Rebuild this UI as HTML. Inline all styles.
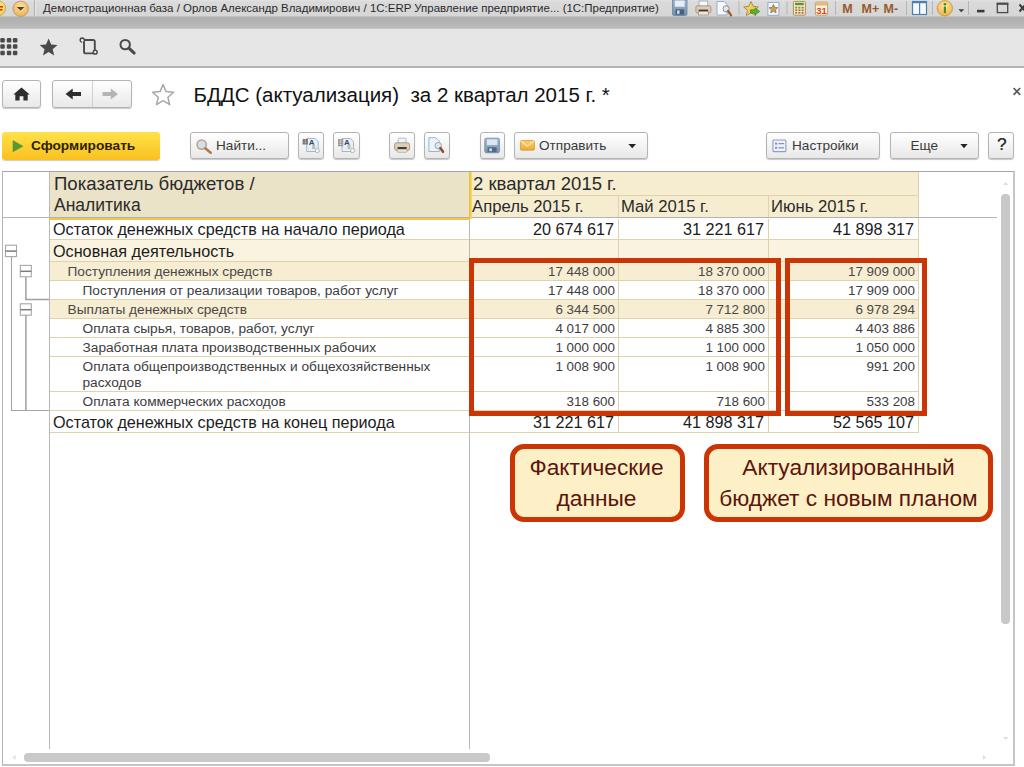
<!DOCTYPE html>
<html><head><meta charset="utf-8">
<style>
*{box-sizing:border-box;margin:0;padding:0}
html,body{width:1024px;height:767px;overflow:hidden;background:#fff}
body{font-family:"Liberation Sans",sans-serif;position:relative;color:#222}
.abs{position:absolute}
.btn{position:absolute;border:1px solid #b4b4b4;border-radius:3px;background:linear-gradient(#ffffff,#e8e8e8);box-shadow:0 1px 1px rgba(0,0,0,.22)}
.bt{position:absolute;font-size:13.6px;line-height:16px;color:#3a3a3a;white-space:nowrap}
.cell{position:absolute;white-space:nowrap}
.hl{position:absolute;background:#ddd3ad}
.num{text-align:right}
.red{position:absolute;border:5px solid #cb3506}
.call{position:absolute;border:5px solid #cb3506;border-radius:14px;background:#fdefc6;color:#5b150b;font-size:22.7px;line-height:31px;text-align:center;white-space:nowrap}
svg{position:absolute;overflow:visible}
</style></head><body>
<div class="abs" style="left:0;top:28px;width:1024px;height:38px;background:#e6e6e6"></div>
<div class="abs" style="left:0;top:0;width:1024px;height:30px;background:linear-gradient(#e2e2e2 0,#dadada 2px,#d6d6d6 15.800px,#b0b0b0 17.200px,#b3b3b3 22px,#bcbcbc 28.300px,#e6e6e6 29.300px,#e6e6e6 30px)"></div>
<div class="abs" style="left:0;top:66px;width:1024px;height:2px;background:#b4b4b4"></div>
<div class="abs" style="left:43px;top:0.500px;font-size:11.48px;line-height:14px;color:#2a2a2a;white-space:nowrap">Демонстрационная база / Орлов Александр Владимирович / 1С:ERP Управление предприятие... (1С:Предприятие)</div>
<!-- title bar icons -->
<svg style="left:0;top:0" width="1024" height="30" viewBox="0 0 1024 30">
<defs>
<radialGradient id="gOr" cx="50%" cy="35%" r="65%"><stop offset="0" stop-color="#ffe0a0"/><stop offset="1" stop-color="#eeb055"/></radialGradient>
<radialGradient id="g1c" cx="60%" cy="40%" r="70%"><stop offset="0" stop-color="#fff08a"/><stop offset="1" stop-color="#f3c030"/></radialGradient>
<radialGradient id="gInf" cx="50%" cy="35%" r="65%"><stop offset="0" stop-color="#ffe9a8"/><stop offset="1" stop-color="#efb040"/></radialGradient>
<linearGradient id="gFl" x1="0" y1="0" x2="0" y2="1"><stop offset="0" stop-color="#a3b8cc"/><stop offset="1" stop-color="#7590ab"/></linearGradient>
</defs>
<!-- 1C logo partially cut -->
<circle cx="-2" cy="8.3" r="7.6" fill="url(#g1c)" stroke="#b9a070" stroke-width="0.8"/>
<rect x="-3" y="6" width="6" height="1.6" fill="#e03a10"/><rect x="-3" y="9" width="5.5" height="1.6" fill="#e03a10"/>
<!-- orange round menu -->
<circle cx="20.7" cy="8.8" r="7.7" fill="url(#gOr)" stroke="#b5987a" stroke-width="0.9"/>
<path d="M16.800 7.100h7.600l-3.800 3.300z" fill="#4b4032"/>
<rect x="34" y="0" width="1" height="16" fill="#b0b0b0"/><rect x="35" y="0" width="1" height="16" fill="#e8e8e8"/>
<!-- floppy -->
<g transform="translate(672.5,0)">
<path d="M0 0h14.5v14a1.5 1.5 0 0 1-1.5 1.5H1.5A1.500 1.500 0 0 1 0 14z" fill="url(#gFl)" stroke="#6a86a3" stroke-width="0.8"/>
<rect x="2.4" y="0.5" width="9.7" height="6.2" fill="#e6eef7"/>
<rect x="3" y="9.3" width="8.6" height="5.4" fill="#4a6079"/><rect x="4.6" y="10.4" width="2.4" height="3.4" fill="#d8e2ee"/>
</g>
<!-- printer -->
<g transform="translate(695.5,1)">
<rect x="3.6" y="0" width="8.6" height="6" fill="#f5f8fc" stroke="#9aa7b6" stroke-width="0.8"/>
<rect x="0.4" y="4.8" width="15" height="7.2" rx="1.6" fill="#dccbb3" stroke="#9c8a74" stroke-width="0.8"/>
<rect x="3.2" y="8.6" width="9.4" height="1.8" fill="#3a3a3a"/>
<rect x="3" y="10.6" width="9.8" height="3.4" fill="#eee6da" stroke="#9c8a74" stroke-width="0.7"/>
</g>
<!-- preview -->
<g transform="translate(716.5,1)">
<path d="M0.5 0.5h7l3 3v10.500h-10z" fill="#f6f9fd" stroke="#8ea7c4" stroke-width="0.9"/>
<circle cx="9.6" cy="7.800" r="3.100" fill="#dfe9f5" stroke="#9a8a80" stroke-width="1"/>
<path d="M11.6 10l3 4.300" stroke="#9a5a30" stroke-width="2.200" stroke-linecap="round"/>
</g>
<rect x="738.500" y="1" width="1" height="14" fill="#b5b5b5"/>
<!-- star with green arrow -->
<g transform="translate(743.500,1.500)">
<path d="M7.500 0l2.200 4.800 5.100 0.600-3.800 3.500 1.100 5.100-4.600-2.700-4.600 2.700 1.100-5.100L0.200 5.400l5.100-0.600z" fill="#f2cf58" stroke="#a98544" stroke-width="0.9"/>
<path d="M7 8.300h4.600V6.200l4.600 3.700-4.600 3.700v-2.100H7z" fill="#58b52e" stroke="#3b8a1c" stroke-width="0.700"/>
</g>
<!-- star in page -->
<g transform="translate(767.500,2)">
<rect x="0.400" y="0.400" width="11" height="12.800" fill="#f5f8fc" stroke="#8ea7c4" stroke-width="0.9"/>
<path d="M5.900 2.400l1.300 2.900 3.100 0.400-2.300 2.100 0.600 3.100-2.700-1.600-2.700 1.600 0.600-3.100-2.300-2.100 3.100-0.400z" fill="#c9a25a" stroke="#8a6a3a" stroke-width="0.700"/>
</g>
<rect x="786.500" y="1" width="1" height="14" fill="#b5b5b5"/>
<!-- calc -->
<g transform="translate(793,1)">
<rect x="0.400" y="0.400" width="12" height="13.800" rx="1" fill="#f3e7c2" stroke="#a98a52" stroke-width="0.9"/>
<rect x="2" y="1.800" width="8.800" height="2.400" fill="#4e9a3a"/>
<g fill="#9a7a44"><rect x="2.200" y="5.800" width="2" height="1.700"/><rect x="5.400" y="5.800" width="2" height="1.700"/><rect x="8.600" y="5.800" width="2" height="1.700"/><rect x="2.200" y="8.400" width="2" height="1.700"/><rect x="5.400" y="8.400" width="2" height="1.700"/><rect x="8.600" y="8.400" width="2" height="1.700"/><rect x="2.200" y="11" width="2" height="1.700"/><rect x="5.400" y="11" width="2" height="1.700"/><rect x="8.600" y="11" width="2" height="1.700"/></g>
</g>
<!-- calendar -->
<g transform="translate(815,0.500)">
<rect x="0.400" y="1.600" width="12.200" height="13" rx="1" fill="#fbf3df" stroke="#b99a62" stroke-width="0.9"/>
<rect x="0.800" y="2" width="11.400" height="3" fill="#eab673"/>
<text x="6.500" y="13.400" font-family="Liberation Sans" font-weight="bold" font-size="9.500" text-anchor="middle" fill="#e2441c">31</text>
</g>
<rect x="835" y="1" width="1" height="14" fill="#b5b5b5"/>
<g font-family="Liberation Sans" font-weight="bold" font-size="12.500" fill="#99592c">
<text x="842.300" y="12.800">M</text><text x="861.600" y="12.800">M+</text><text x="883.600" y="12.800">M-</text></g>
<rect x="906" y="1" width="1" height="14" fill="#b5b5b5"/>
<!-- window -->
<rect x="912.500" y="1.500" width="14" height="13" fill="#f4f8fc" stroke="#4f7fae" stroke-width="1.200"/><rect x="912" y="1" width="15" height="2.200" fill="#4f7fae"/><rect x="919" y="2" width="1.200" height="12.500" fill="#4f7fae"/>
<rect x="932" y="1" width="1" height="14" fill="#b5b5b5"/>
<!-- info -->
<circle cx="944.800" cy="8.300" r="7.700" fill="url(#gInf)" stroke="#c09a5a" stroke-width="0.9"/>
<rect x="943.800" y="6.600" width="2.200" height="6.400" fill="#4d8a22"/><circle cx="944.900" cy="4.300" r="1.300" fill="#4d8a22"/>
<path d="M958.400 9.300h5.800l-2.900 3z" fill="#3c3c3c"/>
<rect x="968" y="1" width="1" height="14" fill="#b5b5b5"/>
<rect x="977" y="9.800" width="7.500" height="2.600" fill="#3a3a3a"/>
<rect x="997.300" y="3.400" width="10.400" height="9.200" fill="none" stroke="#4a4a4a" stroke-width="1.300"/><rect x="996.700" y="2.800" width="11.600" height="2" fill="#4a4a4a"/>
<path d="M1019.500 4.500l6 7M1025.500 4.500l-6 7" stroke="#3a3a3a" stroke-width="2"/>
</svg>
<!-- section toolbar icons -->
<svg style="left:0;top:28px" width="160" height="38" viewBox="0 28 160 38">
<g fill="#4a4a4a">
<rect x="0.300" y="38" width="4.500" height="4.500" rx="1.200"/><rect x="6.800" y="38" width="4.500" height="4.500" rx="1.200"/><rect x="12.900" y="38" width="4.500" height="4.500" rx="1.200"/>
<rect x="0.300" y="44.300" width="4.500" height="4.500" rx="1.200"/><rect x="6.800" y="44.300" width="4.500" height="4.500" rx="1.200"/><rect x="12.900" y="44.300" width="4.500" height="4.500" rx="1.200"/>
<rect x="0.300" y="50.700" width="4.500" height="4.500" rx="1.200"/><rect x="6.800" y="50.700" width="4.500" height="4.500" rx="1.200"/><rect x="12.900" y="50.700" width="4.500" height="4.500" rx="1.200"/>
<path d="M48.600 38.600l2.600 5.900 6.300 0.600-4.800 4.100 1.500 6.300-5.600-3.400-5.600 3.400 1.500-6.300-4.800-4.100 6.300-0.600z"/>
</g>
<!-- history scroll -->
<path d="M82.200 41.800a1.800 1.800 0 1 1 1.800-1.800h9.200a1.600 1.600 0 0 1 1.600 1.600v9.500M84 40v11.400a2 2 0 0 0 2 2h8.600" fill="none" stroke="#4a4a4a" stroke-width="1.900" stroke-linejoin="round"/>
<circle cx="95.200" cy="52.200" r="1.900" fill="#f4f4f4" stroke="#4a4a4a" stroke-width="1.500"/>
<circle cx="82.300" cy="40.300" r="1.300" fill="#f4f4f4"/>
<!-- search -->
<circle cx="125.200" cy="44.600" r="4.700" fill="none" stroke="#4a4a4a" stroke-width="2"/>
<path d="M128.900 48.200l5.300 4.900" stroke="#4a4a4a" stroke-width="3" stroke-linecap="round"/>
</svg>

<div class="btn" style="left:2px;top:80px;width:39px;height:28px"></div>
<div class="btn" style="left:52px;top:80px;width:80px;height:28px"></div>
<div class="abs" style="left:92px;top:81px;width:1px;height:26px;background:#d0d0d0"></div>
<div class="abs" style="left:193.500px;top:83px;font-size:20.500px;line-height:24px;color:#111;white-space:pre">БДДС (актуализация)  за 2 квартал 2015 г. *</div>
<div class="abs" style="left:2px;top:132px;width:158px;height:27.5px;border-radius:3px;background:linear-gradient(#ffe24a,#f9c01f);box-shadow:0 1px 1px rgba(0,0,0,.2)"></div>
<div class="abs" style="left:31px;top:138px;font-size:13.7px;font-weight:bold;line-height:16px;color:#2b2200;white-space:nowrap">Сформировать</div>
<div class="btn" style="left:190px;top:132px;width:98.5px;height:27px"></div>
<div class="btn" style="left:298px;top:132px;width:26px;height:27px"></div>
<div class="btn" style="left:333px;top:132px;width:26.5px;height:27px"></div>
<div class="btn" style="left:389px;top:132px;width:26px;height:27px"></div>
<div class="btn" style="left:424px;top:132px;width:26px;height:27px"></div>
<div class="btn" style="left:479.5px;top:132px;width:25.5px;height:27px"></div>
<div class="btn" style="left:514px;top:132px;width:133.5px;height:27px"></div>
<div class="btn" style="left:766px;top:132px;width:114px;height:27px"></div>
<div class="btn" style="left:889.5px;top:132px;width:89.5px;height:27px"></div>
<div class="btn" style="left:988px;top:132px;width:26px;height:27px"></div>
<div class="bt" style="left:216px;top:138px">Найти...</div>
<div class="bt" style="left:539px;top:138px">Отправить</div>
<div class="bt" style="left:792px;top:138px">Настройки</div>
<div class="bt" style="left:910.500px;top:138px">Еще</div>
<div class="bt" style="left:997px;top:136.5px;font-size:17px;font-weight:normal;color:#333;text-shadow:0.300px 0 0 #333">?</div>
<!-- nav + command bar icons -->
<svg style="left:0;top:70px" width="1024" height="100" viewBox="0 70 1024 100">
<defs>
<linearGradient id="gFl2" x1="0" y1="0" x2="0" y2="1"><stop offset="0" stop-color="#aabdd0"/><stop offset="1" stop-color="#7c96b0"/></linearGradient>
<linearGradient id="gEnv" x1="0" y1="0" x2="0" y2="1"><stop offset="0" stop-color="#f9d376"/><stop offset="1" stop-color="#e9a935"/></linearGradient>
</defs>
<!-- home -->
<path d="M21.500 87.500l8.200 7h-2v6h-4.300v-4.200h-3.800v4.200h-4.300v-6h-2z" fill="#2e2e2e"/>
<!-- back -->
<path d="M65.500 94l7.200-5.600v3.700h8.300v3.800h-8.300v3.700z" fill="#2e2e2e"/>
<!-- forward -->
<path d="M118 94l-7.200-5.600v3.700h-8.300v3.800h8.300v3.700z" fill="#b4b4b4"/>
<!-- favourite star outline -->
<path d="M163.100 84.600l3 7 7.600 0.700-5.800 5 1.800 7.400-6.600-4-6.600 4 1.800-7.400-5.800-5 7.600-0.700z" fill="#fff" stroke="#a8a8a8" stroke-width="1.500" stroke-linejoin="round"/>
<!-- play -->
<path d="M13 140.600l10 5.600-10 5.600z" fill="#4d9e2c"/><path d="M13 140.600l10 5.600-10 5.600z" fill="none" stroke="#7a8a3a" stroke-width="0.600"/>
<!-- find magnifier -->
<circle cx="201.700" cy="144.600" r="4.600" fill="#cfe0f2" stroke="#c3a083" stroke-width="1.500"/>
<path d="M205.300 148.300l5.400 4.400" stroke="#ad7c52" stroke-width="2.600" stroke-linecap="round"/>
<!-- doc icons -->
<g transform="translate(302.700,137)">
<path d="M4 1.500h8.500l3 3V14.500H4z" fill="#e9eff7" stroke="#a3b6cc" stroke-width="1"/>
<rect x="0" y="2.200" width="5.200" height="5.200" fill="#5a5a5a"/><path d="M0 4h5.200M0 5.800h5.200M2.600 2.200v5.200" stroke="#c8c8c8" stroke-width="0.600"/>
<text x="6" y="7.600" font-family="Liberation Sans" font-weight="bold" font-size="8" fill="#34466a">A</text>
<rect x="9.500" y="7.500" width="3" height="4.500" fill="#b8c0b4"/>
<circle cx="14.600" cy="13.600" r="2.100" fill="#f4f4f4" stroke="#b0b0b0" stroke-width="0.900"/>
</g>
<g transform="translate(338,137)">
<path d="M4 1.500h8.500l3 3V14.500H4z" fill="#e9eff7" stroke="#a3b6cc" stroke-width="1"/>
<rect x="0" y="2.200" width="5.200" height="7" fill="#8a8a8a"/><path d="M0 4h5.200M0 5.800h5.200M0 7.600h5.200M2.600 2.200v7" stroke="#d8d8d8" stroke-width="0.600"/>
<text x="6" y="7.600" font-family="Liberation Sans" font-weight="bold" font-size="8" fill="#34466a">A</text>
<rect x="9.500" y="7.500" width="3" height="4.500" fill="#b8c0b4"/>
<circle cx="14.600" cy="13.600" r="2.100" fill="#f4f4f4" stroke="#b0b0b0" stroke-width="0.900"/>
</g>
<!-- printer -->
<g transform="translate(394.200,137.800)">
<rect x="4" y="0.400" width="7.800" height="6" rx="1" fill="#f0f5fb" stroke="#a9b7c8" stroke-width="0.900"/>
<rect x="0.400" y="5" width="15" height="7.600" rx="2" fill="#dfcfb9" stroke="#a59380" stroke-width="0.900"/>
<rect x="3.400" y="9.300" width="9" height="1.900" fill="#2e2e2e"/>
<rect x="3" y="11.400" width="9.800" height="3" rx="0.800" fill="#efe8de" stroke="#a59380" stroke-width="0.700"/>
</g>
<!-- preview -->
<g transform="translate(428.400,137.200)">
<path d="M0.500 0.500h7l3.400 3.400v10.400h-10.400z" fill="#eef3fa" stroke="#9db3cc" stroke-width="1"/>
<circle cx="9.800" cy="8.400" r="3.200" fill="#dde6f3" stroke="#a9a2a8" stroke-width="1"/>
<path d="M12 10.800l2.600 3.800" stroke="#8a5330" stroke-width="2.600" stroke-linecap="round"/>
</g>
<!-- save floppy -->
<g transform="translate(484.400,137.800)">
<rect x="0.400" y="0.400" width="14.600" height="14.600" rx="1.500" fill="url(#gFl2)" stroke="#6f8eb0" stroke-width="0.900"/>
<rect x="2.600" y="1.600" width="10.200" height="5.600" fill="#dde7f2"/>
<rect x="3.200" y="9.400" width="9" height="5" fill="#4f6988"/><rect x="5" y="10.600" width="2.400" height="2.800" fill="#dfe7f0"/>
</g>
<!-- envelope -->
<rect x="520.400" y="140.600" width="14" height="9.600" rx="1" fill="url(#gEnv)" stroke="#d69a2c" stroke-width="0.800"/>
<path d="M520.800 141l6.600 5 6.600-5" fill="none" stroke="#fbe6a8" stroke-width="1.100"/>
<!-- dropdown arrows -->
<path d="M628.400 144h7.600l-3.800 4.200z" fill="#222"/>
<path d="M960.400 144h7.200l-3.600 4.200z" fill="#222"/>
<!-- settings icon -->
<rect x="772.900" y="140" width="13" height="11.600" rx="1" fill="#eef1f8" stroke="#8e9ec4" stroke-width="1.100"/>
<g fill="#8793b8"><rect x="775" y="142.600" width="2.200" height="2"/><rect x="778.400" y="143" width="5.600" height="1.200"/><rect x="775" y="146.800" width="2.200" height="2"/><rect x="778.400" y="147.200" width="5.600" height="1.200"/></g>
<!-- close x -->
<path d="M1013.600 88l6.600 6.800M1020.200 88l-6.600 6.800" stroke="#5a5a5a" stroke-width="1.700"/>
</svg>

<div class="abs" style="left:2px;top:171px;width:1013px;height:595px;border:2px solid #c6c6c6;border-top:1px solid #a6a6a6;border-left:1px solid #b4b4b4"></div>
<div class="abs" style="left:49px;top:172px;width:420px;height:46px;background:#eae3c8"></div>
<div class="abs" style="left:470px;top:172px;width:448px;height:46px;background:#f6edd0"></div>
<div class="cell" style="left:54px;top:174px;font-size:18.600px;line-height:20.5px;color:#2a2a2a">Показатель бюджетов /</div>
<div class="cell" style="left:54px;top:194.5px;font-size:17.5px;line-height:20.5px;color:#2a2a2a">Аналитика</div>
<div class="cell" style="left:473px;top:173.5px;font-size:18.5px;line-height:20px;color:#2a2a2a">2 квартал 2015 г.</div>
<div class="cell" style="left:472px;top:197px;font-size:16.7px;line-height:20px;color:#2a2a2a">Апрель 2015 г.</div>
<div class="cell" style="left:621px;top:197px;font-size:16.7px;line-height:20px;color:#2a2a2a">Май 2015 г.</div>
<div class="cell" style="left:771px;top:197px;font-size:16.7px;line-height:20px;color:#2a2a2a">Июнь 2015 г.</div>
<div class="hl" style="left:470px;top:195px;width:448px;height:1px"></div>
<div class="hl" style="left:618px;top:196px;width:1px;height:22px"></div>
<div class="hl" style="left:768px;top:196px;width:1px;height:22px"></div>
<div class="abs" style="left:49px;top:239px;width:869px;height:22px;background:#faf3df"></div>
<div class="abs" style="left:49px;top:261px;width:869px;height:19px;background:#f6edd2"></div>
<div class="abs" style="left:49px;top:299px;width:869px;height:19px;background:#f6edd2"></div>
<div class="cell" style="left:53px;top:219px;font-size:16.2px;line-height:20px;color:#1c1c1c">Остаток денежных средств на начало периода</div>
<div class="cell num" style="left:469px;top:219px;width:145px;font-size:16.2px;line-height:20px;color:#1c1c1c">20 674 617</div>
<div class="cell num" style="left:618px;top:219px;width:146px;font-size:16.2px;line-height:20px;color:#1c1c1c">31 221 617</div>
<div class="cell num" style="left:768px;top:219px;width:146px;font-size:16.2px;line-height:20px;color:#1c1c1c">41 898 317</div>
<div class="hl" style="left:49px;top:239px;width:870px;height:1px"></div>
<div class="cell" style="left:53px;top:240px;font-size:16.2px;line-height:22px;color:#1c1c1c">Основная деятельность</div>
<div class="hl" style="left:49px;top:261px;width:870px;height:1px"></div>
<div class="cell" style="left:67.5px;top:264px;font-size:13.7px;line-height:16px;color:#484848">Поступления денежных средств</div>
<div class="cell num" style="left:469px;top:264px;width:146px;font-size:13.4px;line-height:16px;color:#484848">17 448 000</div>
<div class="cell num" style="left:618px;top:264px;width:147px;font-size:13.4px;line-height:16px;color:#484848">18 370 000</div>
<div class="cell num" style="left:768px;top:264px;width:147px;font-size:13.4px;line-height:16px;color:#484848">17 909 000</div>
<div class="hl" style="left:49px;top:280px;width:870px;height:1px"></div>
<div class="cell" style="left:82.5px;top:283px;font-size:13.7px;line-height:16px;color:#3c3c3c">Поступления от реализации товаров, работ услуг</div>
<div class="cell num" style="left:469px;top:283px;width:146px;font-size:13.4px;line-height:16px;color:#3c3c3c">17 448 000</div>
<div class="cell num" style="left:618px;top:283px;width:147px;font-size:13.4px;line-height:16px;color:#3c3c3c">18 370 000</div>
<div class="cell num" style="left:768px;top:283px;width:147px;font-size:13.4px;line-height:16px;color:#3c3c3c">17 909 000</div>
<div class="hl" style="left:49px;top:299px;width:870px;height:1px"></div>
<div class="cell" style="left:67.5px;top:302px;font-size:13.7px;line-height:16px;color:#484848">Выплаты денежных средств</div>
<div class="cell num" style="left:469px;top:302px;width:146px;font-size:13.4px;line-height:16px;color:#484848">6 344 500</div>
<div class="cell num" style="left:618px;top:302px;width:147px;font-size:13.4px;line-height:16px;color:#484848">7 712 800</div>
<div class="cell num" style="left:768px;top:302px;width:147px;font-size:13.4px;line-height:16px;color:#484848">6 978 294</div>
<div class="hl" style="left:49px;top:318px;width:870px;height:1px"></div>
<div class="cell" style="left:82.5px;top:321px;font-size:13.7px;line-height:16px;color:#3c3c3c">Оплата сырья, товаров, работ, услуг</div>
<div class="cell num" style="left:469px;top:321px;width:146px;font-size:13.4px;line-height:16px;color:#3c3c3c">4 017 000</div>
<div class="cell num" style="left:618px;top:321px;width:147px;font-size:13.4px;line-height:16px;color:#3c3c3c">4 885 300</div>
<div class="cell num" style="left:768px;top:321px;width:147px;font-size:13.4px;line-height:16px;color:#3c3c3c">4 403 886</div>
<div class="hl" style="left:49px;top:337px;width:870px;height:1px"></div>
<div class="cell" style="left:82.5px;top:340px;font-size:13.7px;line-height:16px;color:#3c3c3c">Заработная плата производственных рабочих</div>
<div class="cell num" style="left:469px;top:340px;width:146px;font-size:13.4px;line-height:16px;color:#3c3c3c">1 000 000</div>
<div class="cell num" style="left:618px;top:340px;width:147px;font-size:13.4px;line-height:16px;color:#3c3c3c">1 100 000</div>
<div class="cell num" style="left:768px;top:340px;width:147px;font-size:13.4px;line-height:16px;color:#3c3c3c">1 050 000</div>
<div class="hl" style="left:49px;top:356px;width:870px;height:1px"></div>
<div class="cell" style="left:82.5px;top:359px;font-size:13.7px;line-height:16px;color:#3c3c3c">Оплата общепроизводственных и общехозяйственных<br>расходов</div>
<div class="cell num" style="left:469px;top:359px;width:146px;font-size:13.4px;line-height:16px;color:#3c3c3c">1 008 900</div>
<div class="cell num" style="left:618px;top:359px;width:147px;font-size:13.4px;line-height:16px;color:#3c3c3c">1 008 900</div>
<div class="cell num" style="left:768px;top:359px;width:147px;font-size:13.4px;line-height:16px;color:#3c3c3c">991 200</div>
<div class="hl" style="left:49px;top:391px;width:870px;height:1px"></div>
<div class="cell" style="left:82.5px;top:394px;font-size:13.7px;line-height:16px;color:#3c3c3c">Оплата коммерческих расходов</div>
<div class="cell num" style="left:469px;top:394px;width:146px;font-size:13.4px;line-height:16px;color:#3c3c3c">318 600</div>
<div class="cell num" style="left:618px;top:394px;width:147px;font-size:13.4px;line-height:16px;color:#3c3c3c">718 600</div>
<div class="cell num" style="left:768px;top:394px;width:147px;font-size:13.4px;line-height:16px;color:#3c3c3c">533 208</div>
<div class="hl" style="left:49px;top:410px;width:870px;height:1px"></div>
<div class="cell" style="left:53px;top:411px;font-size:16.2px;line-height:22px;color:#1c1c1c">Остаток денежных средств на конец периода</div>
<div class="cell num" style="left:469px;top:411px;width:145px;font-size:16.2px;line-height:22px;color:#1c1c1c">31 221 617</div>
<div class="cell num" style="left:618px;top:411px;width:146px;font-size:16.2px;line-height:22px;color:#1c1c1c">41 898 317</div>
<div class="cell num" style="left:768px;top:411px;width:146px;font-size:16.2px;line-height:22px;color:#1c1c1c">52 565 107</div>
<div class="hl" style="left:49px;top:432px;width:870px;height:1px"></div>
<div class="hl" style="left:618px;top:219px;width:1px;height:214px"></div>
<div class="hl" style="left:768px;top:219px;width:1px;height:214px"></div>
<div class="hl" style="left:918px;top:172px;width:1px;height:261px"></div>
<div class="abs" style="left:49px;top:172px;width:1px;height:577px;background:#b9b9b9"></div>
<div class="abs" style="left:469px;top:219px;width:1px;height:530px;background:#b9b9b9"></div>
<div class="abs" style="left:3px;top:217px;width:994px;height:1px;background:#b3b3b3"></div>
<div class="abs" style="left:49px;top:218px;width:421px;height:2px;background:#f2c548"></div>
<div class="abs" style="left:469px;top:172px;width:3px;height:47px;background:linear-gradient(90deg,#d9b54a,#f6cb3c 40%,#f8dc7a)"></div>
<svg style="left:0;top:0" width="60" height="440" viewBox="0 0 60 440"><path d="M11.500 257V410.500H49" fill="none" stroke="#a6a6a6" stroke-width="1.100"/><path d="M25.900 277V299.500H49M25.900 315V410.500" fill="none" stroke="#a0a0a0" stroke-width="1.500"/><rect x="5.5" y="245.2" width="11" height="11.400" fill="#fff" stroke="#a6a6a6" stroke-width="1.100"/><path d="M5.5 251.1h11" stroke="#7d7d7d" stroke-width="1.500"/><rect x="20.3" y="265.4" width="11" height="11.400" fill="#fff" stroke="#a6a6a6" stroke-width="1.100"/><path d="M20.3 271.29999999999995h11" stroke="#7d7d7d" stroke-width="1.500"/><rect x="20.3" y="303.8" width="11" height="11.400" fill="#fff" stroke="#a6a6a6" stroke-width="1.100"/><path d="M20.3 309.7h11" stroke="#7d7d7d" stroke-width="1.500"/></svg>
<div class="red" style="left:469px;top:258px;width:312px;height:158px"></div>
<div class="red" style="left:785px;top:258px;width:142px;height:158px"></div>
<div class="abs" style="left:1001.4px;top:193.6px;width:8.8px;height:430px;border-radius:4px;background:#c8c8c8"></div>
<div class="abs" style="left:24px;top:753px;width:466px;height:9px;border-radius:4px;background:#c9c9c9"></div>
<svg style="left:0;top:0" width="1024" height="767"><g fill="#dedede"><path d="M1003 185l2.700-3 2.700 3z"/><path d="M1003 737l2.700 3 2.700-3z"/><path d="M15.500 755l-3 2.500 3 2.500z"/><path d="M983 755l3 2.500-3 2.500z"/></g></svg>
<div class="call" style="left:510px;top:444px;width:175px;height:78px;padding-top:2.5px;padding-right:2px">Фактические<br>данные</div>
<div class="call" style="left:704px;top:444px;width:289px;height:78px;padding-top:2.5px">Актуализированный<br>бюджет с новым планом</div>
</body></html>
